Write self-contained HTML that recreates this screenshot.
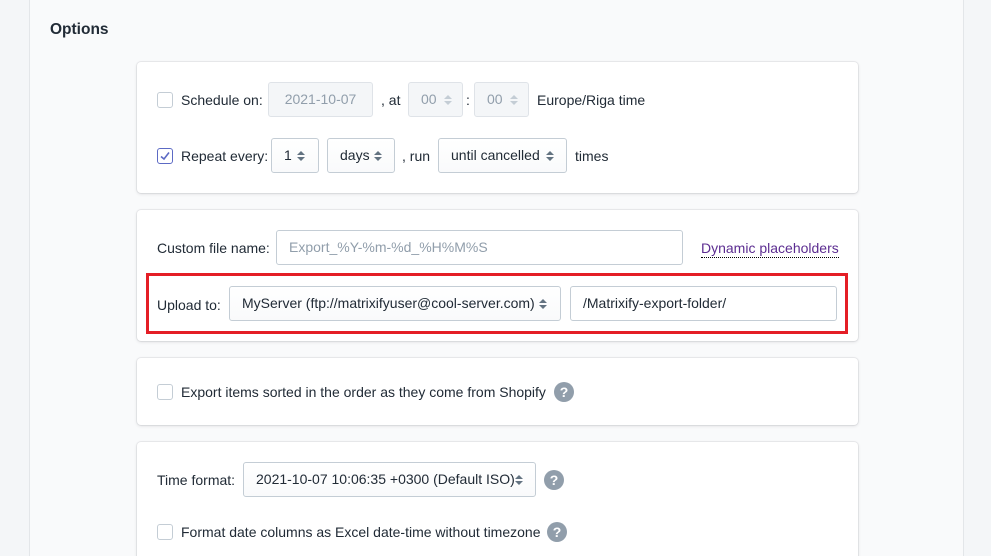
<!DOCTYPE html>
<html style="height:556px;overflow:hidden"><head><meta charset="utf-8"><style>
*{box-sizing:border-box;margin:0;padding:0}
body{width:991px;height:556px;overflow:hidden;background:#f4f6f8;font-family:"Liberation Sans",sans-serif;font-size:14px;color:#212b36;position:relative}
.main{position:absolute;left:29px;top:0;width:935px;height:556px;background:#f9fafb;border-left:1px solid #e3e6e9;border-right:1px solid #e3e6e9}
.a{position:absolute}
.card{position:absolute;left:137px;width:721px;background:#fff;border-radius:4px;box-shadow:0 0 0 1px rgba(63,63,68,.07),0 1px 3px rgba(63,63,68,.15)}
.t{position:absolute;line-height:16px;white-space:nowrap}
.in{position:absolute;height:35px;border:1px solid #c4cdd5;border-radius:3px;background:#fff;line-height:33px;padding-left:12px;white-space:nowrap}
.sel{background:linear-gradient(#fff,#f9fafb)}
.dis{background:#f4f6f8;color:#919eab;border-color:#dfe3e8}
.cb{position:absolute;width:16px;height:16px;border:1px solid #c4cdd5;border-radius:3px;background:#fff}
.ar{position:absolute;top:10px;width:10px;height:14px}
.q{position:absolute;width:20px;height:20px;border-radius:50%;background:#919eab;color:#fff;font-weight:bold;font-size:14px;text-align:center;line-height:20px}
</style></head><body>
<div class="main"></div>
<div class="t" style="left:50px;top:22px;font-size:15.5px;font-weight:bold;color:#212b36">Options</div>

<div class="card" style="top:62px;height:131px"></div>
<div class="cb" style="left:157px;top:92px"></div>
<div class="t" style="left:181px;top:92px">Schedule on:</div>
<div class="in dis" style="left:268px;top:82px;width:105px;text-align:center;padding:0">2021-10-07</div>
<div class="t" style="left:381px;top:92px">, at</div>
<div class="in dis" style="left:408px;top:82px;width:55px">00<svg class="ar" style="left:34px" viewBox="0 0 10 14"><path d="M1 6L5 2L9 6ZM1 8L5 12L9 8Z" fill="#c4cdd5"/></svg></div>
<div class="t" style="left:466px;top:92px">:</div>
<div class="in dis" style="left:474px;top:82px;width:55px">00<svg class="ar" style="left:34px" viewBox="0 0 10 14"><path d="M1 6L5 2L9 6ZM1 8L5 12L9 8Z" fill="#c4cdd5"/></svg></div>
<div class="t" style="left:537px;top:92px">Europe/Riga time</div>

<div class="cb" style="left:157px;top:148px;border-color:#5c6ac4"><svg width="14" height="14" viewBox="0 0 14 14" style="position:absolute;left:0;top:0"><path d="M3 7.5L6 10L11 3.5" stroke="#5c6ac4" stroke-width="1.6" fill="none"/></svg></div>
<div class="t" style="left:181px;top:148px">Repeat every:</div>
<div class="in sel" style="left:271px;top:138px;width:48px">1<svg class="ar" style="left:24px" viewBox="0 0 10 14"><path d="M1 6L5 2L9 6ZM1 8L5 12L9 8Z" fill="#637381"/></svg></div>
<div class="in sel" style="left:327px;top:138px;width:68px">days<svg class="ar" style="left:45px" viewBox="0 0 10 14"><path d="M1 6L5 2L9 6ZM1 8L5 12L9 8Z" fill="#637381"/></svg></div>
<div class="t" style="left:402px;top:148px">, run</div>
<div class="in sel" style="left:438px;top:138px;width:129px">until cancelled<svg class="ar" style="left:106px" viewBox="0 0 10 14"><path d="M1 6L5 2L9 6ZM1 8L5 12L9 8Z" fill="#637381"/></svg></div>
<div class="t" style="left:575px;top:148px">times</div>

<div class="card" style="top:210px;height:131px"></div>
<div class="t" style="left:157px;top:240px">Custom file name:</div>
<div class="in" style="left:276px;top:230px;width:407px;color:#919eab">Export_%Y-%m-%d_%H%M%S</div>
<div class="t" style="left:701px;top:240px;color:#5c2d91;border-bottom:1px dotted #000;line-height:17px">Dynamic placeholders</div>
<div class="a" style="left:146px;top:273px;width:702px;height:61px;border:3px solid #e41e26"></div>
<div class="t" style="left:157px;top:297px">Upload to:</div>
<div class="in sel" style="left:229px;top:286px;width:332px">MyServer (ftp://matrixifyuser@cool-server.com)<svg class="ar" style="left:308px" viewBox="0 0 10 14"><path d="M1 6L5 2L9 6ZM1 8L5 12L9 8Z" fill="#637381"/></svg></div>
<div class="in" style="left:570px;top:286px;width:267px">/Matrixify-export-folder/</div>

<div class="card" style="top:358px;height:67px"></div>
<div class="cb" style="left:157px;top:384px"></div>
<div class="t" style="left:181px;top:384px">Export items sorted in the order as they come from Shopify</div>
<div class="q" style="left:554px;top:382px">?</div>

<div class="card" style="top:442px;height:125px"></div>
<div class="t" style="left:157px;top:472px">Time format:</div>
<div class="in sel" style="left:243px;top:462px;width:293px">2021-10-07 10:06:35 +0300 (Default ISO)<svg class="ar" style="left:270px" viewBox="0 0 10 14"><path d="M1 6L5 2L9 6ZM1 8L5 12L9 8Z" fill="#637381"/></svg></div>
<div class="q" style="left:544px;top:470px">?</div>
<div class="cb" style="left:157px;top:524px"></div>
<div class="t" style="left:181px;top:524px">Format date columns as Excel date-time without timezone</div>
<div class="q" style="left:547px;top:522px">?</div>
</body></html>
